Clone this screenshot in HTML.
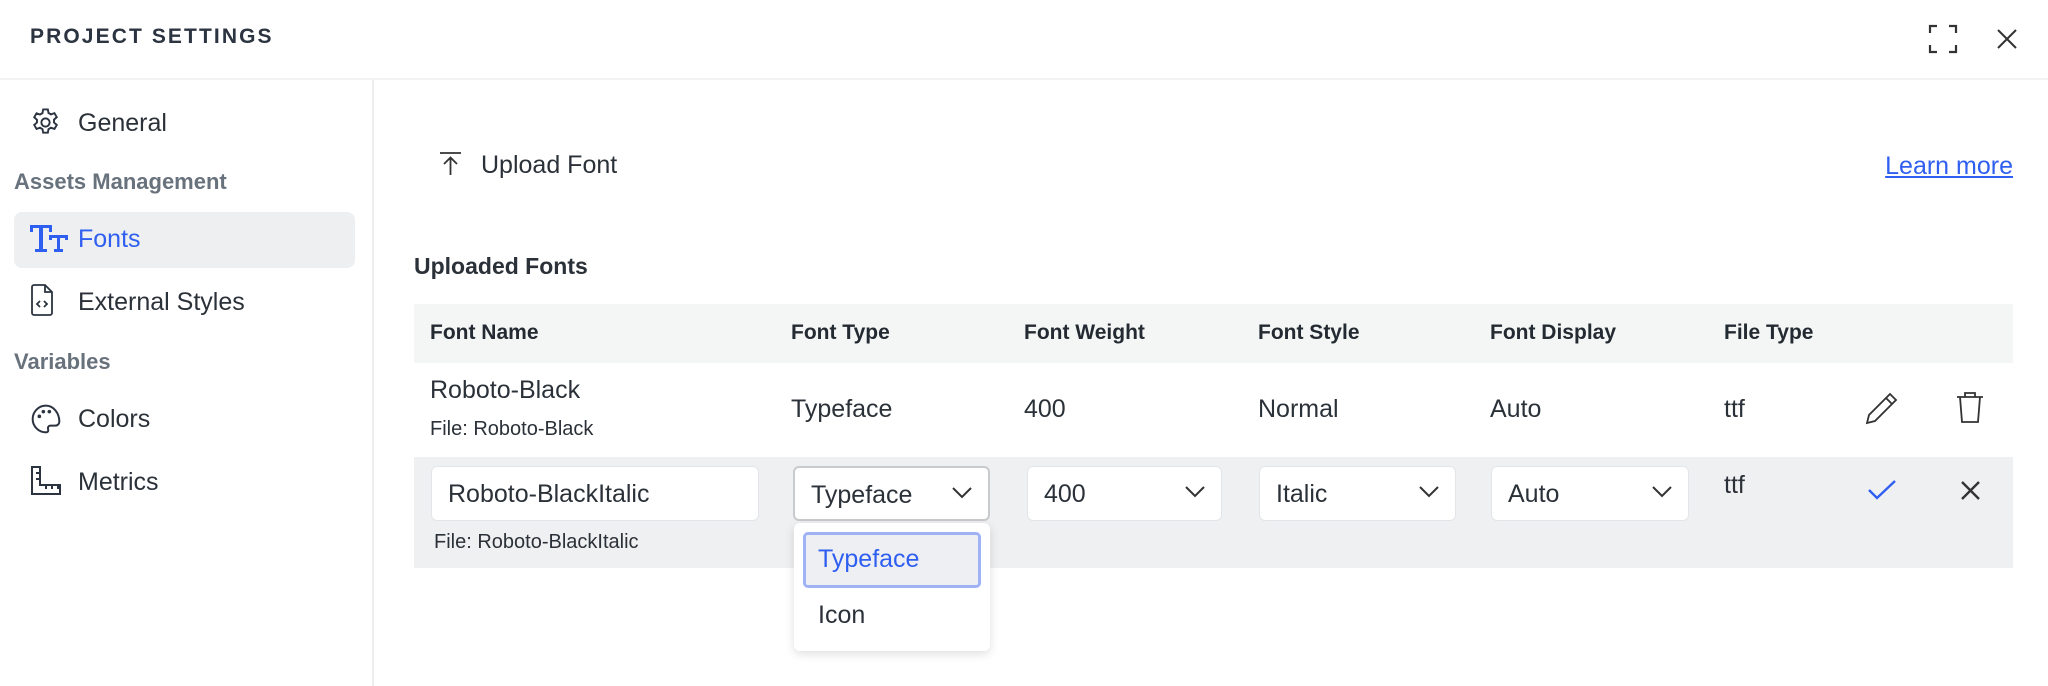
<!DOCTYPE html>
<html><head><meta charset="utf-8"><style>
*{margin:0;padding:0;box-sizing:border-box}
body{width:2048px;height:686px;background:#fff;font-family:"Liberation Sans",Arial,sans-serif;color:#2b3138;position:relative;overflow:hidden}
.a{position:absolute;white-space:nowrap}
.t{font-size:25px;line-height:30px}
.h{font-size:21px;font-weight:bold;line-height:26px;color:#232a31}
.sm{font-size:20px;line-height:24px}
.g{font-size:22px;font-weight:bold;color:#68727d;line-height:26px}
.sel{position:absolute;background:#fff;border:1px solid #e3e5e8;border-radius:6px;height:55px;top:466px}
.sel span{position:absolute;left:16px;top:12px;font-size:25px;line-height:30px}
.sel svg{position:absolute;right:16px;top:19px}
svg{position:absolute;overflow:visible}
</style></head><body>
<div class="a" style="left:30px;top:24px;font-size:21px;font-weight:bold;letter-spacing:2.1px;color:#2b3440;line-height:26px">PROJECT SETTINGS</div>
<svg style="left:1929px;top:25px" width="28" height="28" viewBox="0 0 28 28" fill="none" stroke="#333" stroke-width="2.2"><path d="M1 8V1h7M20 1h7v7M27 20v7h-7M8 27H1v-7"/></svg>
<svg style="left:1997px;top:29px" width="20" height="20" viewBox="0 0 20 20" stroke="#333" stroke-width="2"><path d="M1 1L19 19M19 1L1 19"/></svg>
<div class="a" style="left:0;top:78px;width:2048px;height:2px;background:#f1f2f3"></div>
<div class="a" style="left:372px;top:80px;width:2px;height:606px;background:#eceeef"></div>

<svg style="left:29px;top:106px" width="33" height="33" viewBox="0 0 24 24" fill="none" stroke="#2b3440" stroke-width="1.4"><path d="M10.3 2.5h3.4l.5 2.6 1.8 1 2.5-.9 1.7 2.9-2 1.8v2.1l2 1.8-1.7 2.9-2.5-.9-1.8 1-.5 2.6h-3.4l-.5-2.6-1.8-1-2.5.9-1.7-2.9 2-1.8V10l-2-1.8 1.7-2.9 2.5.9 1.8-1z"/><circle cx="12" cy="12" r="3"/></svg>
<div class="a t" style="left:78px;top:108px">General</div>
<div class="a g" style="left:14px;top:169px">Assets Management</div>
<div class="a" style="left:14px;top:212px;width:341px;height:56px;background:#eeeff1;border-radius:8px"></div>
<svg style="left:30px;top:225px" width="38" height="27" viewBox="0 0 38 27" fill="#2f5ff0"><path d="M0 0h22v7h-3V3h-6v21h4v3H5v-3h4V3H3v4H0z"/><path d="M19 10h19v5h-3v-2h-5v11h3v3h-9v-3h3V13h-5v2h-3z"/></svg>
<div class="a t" style="left:78px;top:224px;color:#2f5ff0">Fonts</div>
<svg style="left:30px;top:284px" width="24" height="32" viewBox="0 0 24 32" fill="none" stroke="#2b3440" stroke-width="1.8"><path d="M2 3a2 2 0 012-2h11l7 7v21a2 2 0 01-2 2H4a2 2 0 01-2-2z"/><path d="M15 1v7h7"/><path d="M10 17l-3 3 3 3M14 17l3 3-3 3"/></svg>
<div class="a t" style="left:78px;top:287px">External Styles</div>
<div class="a g" style="left:14px;top:349px">Variables</div>
<svg style="left:30px;top:403px" width="32" height="32" viewBox="0 0 24 24" fill="none" stroke="#2b3440" stroke-width="1.5"><path d="M12 2a10 10 0 100 20c1.5 0 2-1 1.6-2.2-.5-1.5.3-2.8 1.9-2.8H19a3 3 0 003-3c0-6.5-4.5-12-10-12z"/><circle cx="7" cy="10" r=".6" fill="#2b3440"/><circle cx="10" cy="6.5" r=".6" fill="#2b3440"/><circle cx="14.5" cy="6.5" r=".6" fill="#2b3440"/></svg>
<div class="a t" style="left:78px;top:404px">Colors</div>
<svg style="left:30px;top:465px" width="32" height="32" viewBox="0 0 32 32" fill="none" stroke="#2b3440" stroke-width="2"><path d="M2 2h8v18h20v9H2zM10 8H6M10 14H6M16 20v4M22 20v4M28 20v4"/></svg>
<div class="a t" style="left:78px;top:467px">Metrics</div>

<svg style="left:440px;top:152px" width="21" height="24" viewBox="0 0 21 24" fill="none" stroke="#333" stroke-width="1.8"><path d="M0 1h21M10.5 23V6M4 12l6.5-6.5L17 12"/></svg>
<div class="a t" style="left:481px;top:150px">Upload Font</div>
<div class="a t" style="right:35px;top:151px;color:#2f5ff0;text-decoration:underline">Learn more</div>
<div class="a" style="left:414px;top:252px;font-size:23px;font-weight:bold;line-height:28px;color:#2b3138">Uploaded Fonts</div>

<div class="a" style="left:414px;top:304px;width:1599px;height:59px;background:#f4f6f6"></div>
<div class="a h" style="left:430px;top:320px">Font Name</div>
<div class="a h" style="left:791px;top:320px">Font Type</div>
<div class="a h" style="left:1024px;top:320px">Font Weight</div>
<div class="a h" style="left:1258px;top:320px">Font Style</div>
<div class="a h" style="left:1490px;top:320px">Font Display</div>
<div class="a h" style="left:1724px;top:320px">File Type</div>

<div class="a t" style="left:430px;top:375px">Roboto-Black</div>
<div class="a sm" style="left:430px;top:417px">File: Roboto-Black</div>
<div class="a t" style="left:791px;top:394px">Typeface</div>
<div class="a t" style="left:1024px;top:394px">400</div>
<div class="a t" style="left:1258px;top:394px">Normal</div>
<div class="a t" style="left:1490px;top:394px">Auto</div>
<div class="a t" style="left:1724px;top:394px">ttf</div>
<svg style="left:1866px;top:392px" width="32" height="32" viewBox="0 0 32 32" fill="none" stroke="#333" stroke-width="1.8"><path d="M24 2l6 6L9 29l-8 2 2-8zM20 6l6 6"/></svg>
<svg style="left:1956px;top:392px" width="28" height="32" viewBox="0 0 28 32" fill="none" stroke="#333" stroke-width="1.8"><path d="M1 5h26M9 5V1h10v4M4 5l2 25h16l2-25"/></svg>

<div class="a" style="left:414px;top:457px;width:1599px;height:111px;background:#eff0f2"></div>
<div class="sel" style="left:431px;width:328px"><span>Roboto-BlackItalic</span></div>
<div class="sel" style="left:793px;width:197px;border:2px solid #c8cacd"><span>Typeface</span><svg width="20" height="12" viewBox="0 0 20 12" fill="none" stroke="#333" stroke-width="2"><path d="M1 1l9 9 9-9"/></svg></div>
<div class="sel" style="left:1027px;width:195px"><span>400</span><svg width="20" height="12" viewBox="0 0 20 12" fill="none" stroke="#333" stroke-width="2"><path d="M1 1l9 9 9-9"/></svg></div>
<div class="sel" style="left:1259px;width:197px"><span>Italic</span><svg width="20" height="12" viewBox="0 0 20 12" fill="none" stroke="#333" stroke-width="2"><path d="M1 1l9 9 9-9"/></svg></div>
<div class="sel" style="left:1491px;width:198px"><span>Auto</span><svg width="20" height="12" viewBox="0 0 20 12" fill="none" stroke="#333" stroke-width="2"><path d="M1 1l9 9 9-9"/></svg></div>
<div class="a t" style="left:1724px;top:470px">ttf</div>
<svg style="left:1868px;top:480px" width="28" height="20" viewBox="0 0 28 20" fill="none" stroke="#2f5ff0" stroke-width="2.4"><path d="M1 10l8 8L27 1"/></svg>
<svg style="left:1961px;top:481px" width="19" height="19" viewBox="0 0 19 19" stroke="#333" stroke-width="2.4"><path d="M1 1l17 17M18 1L1 18"/></svg>
<div class="a sm" style="left:434px;top:530px">File: Roboto-BlackItalic</div>

<div class="a" style="left:794px;top:523px;width:196px;height:128px;background:#fff;border-radius:6px;box-shadow:0 3px 10px rgba(0,0,0,.13)"></div>
<div class="a" style="left:803px;top:532px;width:178px;height:56px;background:#eeeff2;border:3px solid #9fb2f3;border-radius:5px"></div>
<div class="a t" style="left:818px;top:544px;color:#2f5ff0">Typeface</div>
<div class="a t" style="left:818px;top:600px">Icon</div>
</body></html>
